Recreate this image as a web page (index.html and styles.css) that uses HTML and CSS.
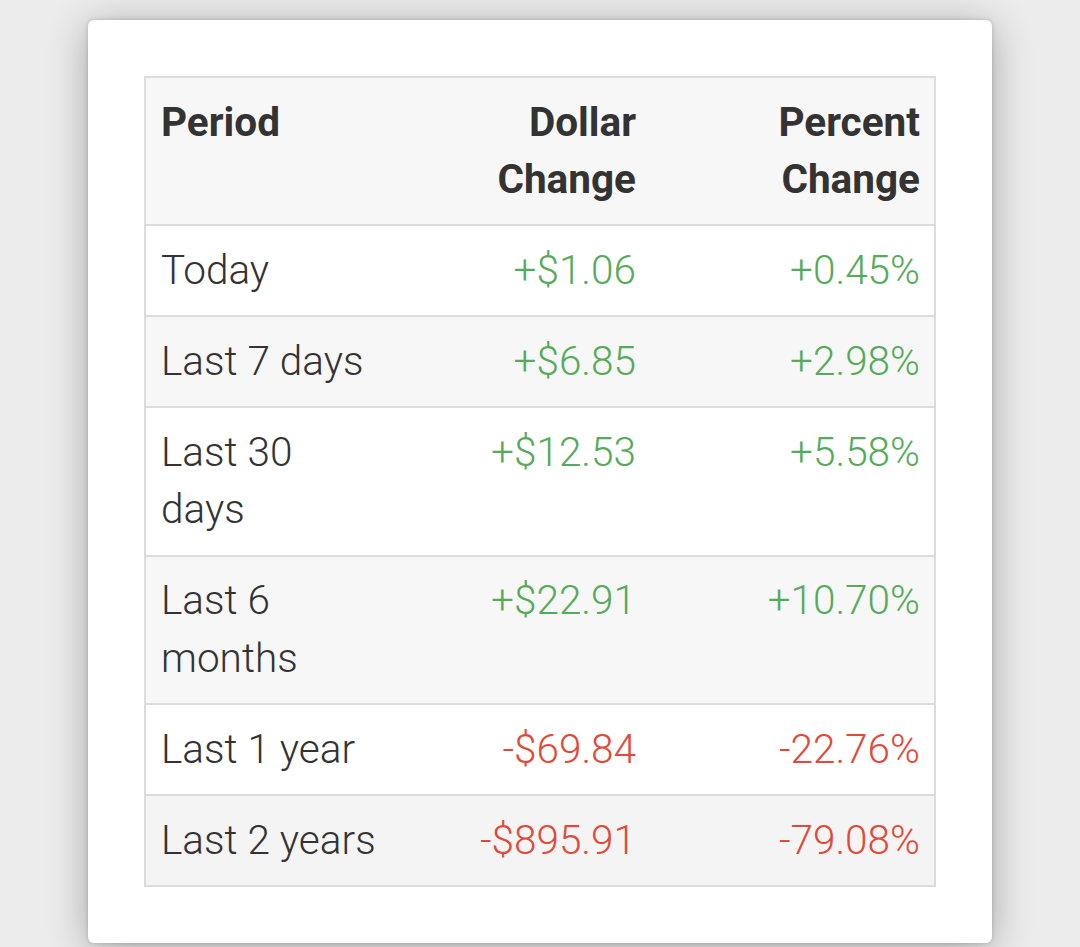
FILE: index.html
```html
<!DOCTYPE html>
<html lang="en">
<head>
<meta charset="utf-8">
<title>Price change</title>
<link rel="stylesheet" href="styles.css">
</head>
<body>
<div class="card">
  <table class="changes">
    <colgroup>
      <col class="c-period">
      <col class="c-dollar">
      <col class="c-percent">
    </colgroup>
    <thead>
      <tr>
        <th class="left">Period</th>
        <th>Dollar Change</th>
        <th>Percent Change</th>
      </tr>
    </thead>
    <tbody>
      <tr><td class="left">Today</td><td class="up">+$1.06</td><td class="up">+0.45%</td></tr>
      <tr><td class="left">Last 7 days</td><td class="up">+$6.85</td><td class="up">+2.98%</td></tr>
      <tr><td class="left">Last 30 days</td><td class="up">+$12.53</td><td class="up">+5.58%</td></tr>
      <tr><td class="left">Last 6 months</td><td class="up">+$22.91</td><td class="up">+10.70%</td></tr>
      <tr><td class="left">Last 1 year</td><td class="down">-$69.84</td><td class="down">-22.76%</td></tr>
      <tr><td class="left">Last 2 years</td><td class="down">-$895.91</td><td class="down">-79.08%</td></tr>
    </tbody>
  </table>
</div>
</body>
</html>
```

FILE: styles.css
```css
html, body {
  margin: 0;
  padding: 0;
}
body {
  background: #ececec;
  padding: 20px 88px 0 88px;
  height: 947px;
  box-sizing: border-box;
  overflow: hidden;
  font-family: Roboto, "Liberation Sans", sans-serif;
}
.card {
  background: #ffffff;
  border-radius: 6px;
  padding: 56px;
  box-shadow: 0 0 4px rgba(0, 0, 0, 0.18), 0 6px 40px rgba(0, 0, 0, 0.3);
}
.changes {
  width: 100%;
  border-collapse: collapse;
  table-layout: fixed;
  border: 2px solid #dcdcdc;
  font-size: 40.5px;
  line-height: 57.6px;
  color: #333333;
}
.c-period { width: 252px; }
.c-dollar { width: 253px; }
.c-percent { width: 285px; }
.changes th,
.changes td {
  padding: 15.65px 15px 15.65px 15px;
  border-top: 2px solid #dcdcdc;
  text-align: right;
  vertical-align: top;
}
.changes th:not(.left),
.changes td:not(.left) {
  padding-right: 14px;
}
.changes th {
  font-weight: 700;
  background: #f7f7f7;
}
.changes td {
  font-weight: 300;
}
.changes .left {
  text-align: left;
}
.changes tbody tr:nth-child(even) td {
  background: #f7f7f7;
}
.changes tbody tr:last-child td {
  background: #f4f4f4;
}
.up {
  color: #55ab59;
}
.down {
  color: #e04a3a;
}
```
